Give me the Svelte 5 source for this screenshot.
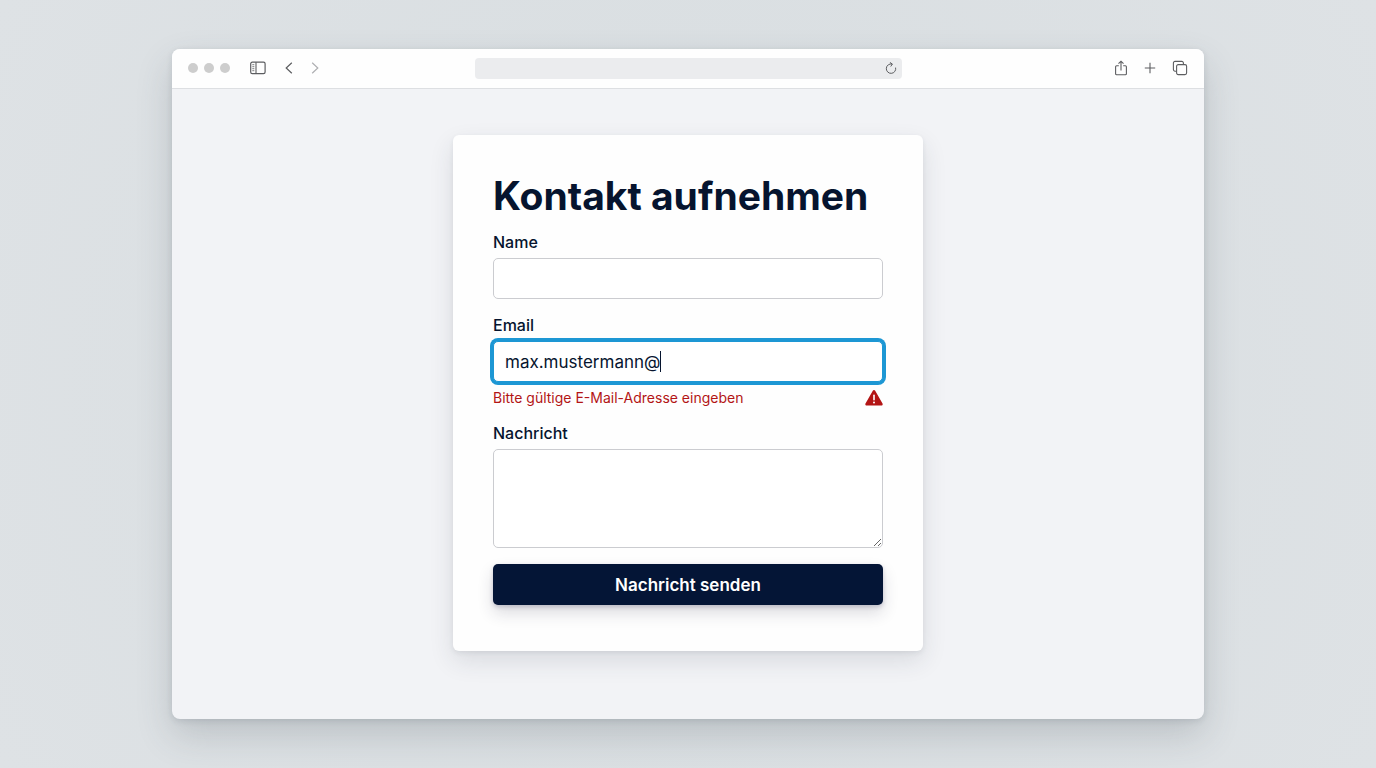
<script lang="ts">
  import { onMount } from 'svelte';

  let name = $state('');
  let email = $state('max.mustermann@');
  let message = $state('');
  let emailActive = $state(true);
  let emailInput: HTMLInputElement;
  let caretLeft = $state(0);

  const emailValid = $derived(/^[^\s@]+@[^\s@]+\.[^\s@]+$/.test(email));

  // Places the custom caret behind the typed address
  function placeCaret() {
    const ctx = document.createElement('canvas').getContext('2d');
    if (!ctx) return;
    const style = getComputedStyle(emailInput);
    ctx.font = `${style.fontWeight} ${style.fontSize} ${style.fontFamily}`;
    caretLeft = Math.round(parseInt(style.paddingLeft) + 1 + ctx.measureText(email).width);
  }

  onMount(() => {
    emailInput.focus();
    placeCaret();
  });

  function submit(event: SubmitEvent) {
    event.preventDefault();
    if (!emailValid) emailInput.focus();
  }
</script>

<div class="desktop">
  <div class="window">
    <header class="toolbar">
      <div class="group left">
        <div class="lights">
          <span></span>
          <span></span>
          <span></span>
        </div>
        <button class="tool sidebar" aria-label="Seitenleiste">
          <svg width="16" height="14" viewBox="0 0 16 14" fill="none" stroke="currentColor">
            <rect x="0.7" y="1.2" width="14.4" height="11.4" rx="1.6" stroke-width="1.2" />
            <path d="M6 1.2v11.4" stroke-width="1.1" />
            <path d="M2.3 3.7h2M2.3 5.7h2M2.3 7.7h2M2.3 9.7h2" stroke-width="0.8" />
          </svg>
        </button>
        <button class="tool back" aria-label="Zurück">
          <svg width="10" height="12" viewBox="0 0 10 12" fill="none" stroke="currentColor" stroke-width="1.2">
            <path d="M7.8 0.8 2.2 6l5.6 5.2" />
          </svg>
        </button>
        <button class="tool forward" aria-label="Vorwärts" disabled>
          <svg width="10" height="12" viewBox="0 0 10 12" fill="none" stroke="currentColor" stroke-width="1.2">
            <path d="M2.2 0.8 7.8 6l-5.6 5.2" />
          </svg>
        </button>
      </div>

      <div class="address">
        <input type="text" aria-label="Adresse" />
        <button class="tool reload" aria-label="Neu laden">
          <svg width="12" height="12" viewBox="0 0 12 12" fill="none" stroke="currentColor" stroke-width="1">
            <path d="M10.6 5.6A4.7 4.7 0 1 1 7.2 2.1" />
            <path d="M4.9 0.4 7.4 2.1 5.7 4.5" />
          </svg>
        </button>
      </div>

      <div class="group right">
        <button class="tool" aria-label="Teilen">
          <svg width="14" height="16" viewBox="0 0 14 16" fill="none" stroke="currentColor" stroke-width="1.1">
            <path d="M4.8 5.8H2.6a1 1 0 0 0-1 1v6.9a1 1 0 0 0 1 1h8.8a1 1 0 0 0 1-1V6.8a1 1 0 0 0-1-1H9.2" />
            <path d="M7 10.4V1.5M4.5 3.7 7 1.2l2.5 2.5" />
          </svg>
        </button>
        <button class="tool" aria-label="Neuer Tab">
          <svg width="12" height="12" viewBox="0 0 12 12" fill="none" stroke="currentColor" stroke-width="1.1">
            <path d="M6 0.8v10.4M0.8 6h10.4" />
          </svg>
        </button>
        <button class="tool" aria-label="Tabübersicht">
          <svg width="16" height="16" viewBox="0 0 16 16" fill="none" stroke="currentColor" stroke-width="1.1">
            <rect x="4.6" y="4.6" width="10" height="10" rx="1.6" />
            <path d="M4.6 11.2H3a1.6 1.6 0 0 1-1.6-1.6V3A1.6 1.6 0 0 1 3 1.4h6.8A1.6 1.6 0 0 1 11.4 3v1.6" />
          </svg>
        </button>
      </div>
    </header>

    <main>
      <form class="card" novalidate onsubmit={submit}>
        <h1>Kontakt aufnehmen</h1>

        <div class="field">
          <label for="name">Name</label>
          <input id="name" type="text" bind:value={name} />
        </div>

        <div class="field">
          <label for="email">Email</label>
          <div class="email-box">
            <input
              id="email"
              type="text"
              inputmode="email"
              class:active={emailActive}
              aria-invalid={!emailValid}
              aria-describedby="email-error"
              bind:value={email}
              bind:this={emailInput}
              oninput={placeCaret}
              onfocus={() => (emailActive = true)}
              onblur={() => (emailActive = false)}
            />
            {#if emailActive}
              <span class="caret" style:left="{caretLeft}px"></span>
            {/if}
          </div>
          {#if !emailValid}
            <div class="error" id="email-error">
              <span>Bitte gültige E-Mail-Adresse eingeben</span>
              <svg width="18" height="16" viewBox="0 0 18 16" aria-hidden="true">
                <path d="M7.8 0.8a1.4 1.4 0 0 1 2.4 0l7.3 12.7a1.4 1.4 0 0 1-1.2 2.1H1.7a1.4 1.4 0 0 1-1.2-2.1Z" fill="#b31515" />
                <path d="M9 5.4v4.4" stroke="#fff" stroke-width="1.6" stroke-linecap="round" />
                <circle cx="9" cy="12.6" r="1" fill="#fff" />
              </svg>
            </div>
          {/if}
        </div>

        <div class="field">
          <label for="message">Nachricht</label>
          <textarea id="message" bind:value={message}></textarea>
        </div>

        <button class="submit" type="submit">Nachricht senden</button>
      </form>
    </main>
  </div>
</div>

<style>
  :global(body) {
    margin: 0;
    font-family: Inter, 'Liberation Sans', sans-serif;
    color: #06142e;
  }

  .desktop {
    box-sizing: border-box;
    min-height: 100vh;
    padding: 49px 12.5%;
    display: flex;
    background: radial-gradient(circle at 50% 50%, #dadfe2 40%, #dee2e5 100%);
  }

  .window {
    flex: 1;
    display: flex;
    flex-direction: column;
    border-radius: 8px;
    overflow: hidden;
    background: #f2f3f6;
    box-shadow:
      0 16px 36px rgba(60, 70, 82, 0.2),
      0 2px 6px rgba(60, 70, 82, 0.14);
  }

  .toolbar {
    display: grid;
    grid-template-columns: 1fr 427px 1fr;
    align-items: center;
    height: 38px;
    padding: 0 16px 1px;
    background: #fefefe;
    border-bottom: 1px solid #dddfe2;
  }

  .group {
    display: flex;
    align-items: center;
  }

  .right {
    justify-content: flex-end;
    gap: 16px;
  }

  .lights {
    display: flex;
    gap: 6px;
    margin-right: 20px;
  }

  .lights span {
    width: 10px;
    height: 10px;
    border-radius: 50%;
    background: #cdcdcd;
  }

  .tool {
    display: flex;
    padding: 0;
    border: none;
    background: none;
    color: #5c5d60;
  }

  .back {
    margin: 0 16px 0 18px;
  }

  .forward {
    color: #aeafb2;
  }

  .address {
    display: flex;
    align-items: center;
    height: 21px;
    padding-right: 5px;
    border-radius: 4px;
    background: #ebecee;
  }

  .address input {
    flex: 1;
    min-width: 0;
    border: none;
    outline: none;
    background: none;
    font: inherit;
    font-size: 12px;
  }

  main {
    flex: 1;
    padding: 46px 24px;
  }

  .card {
    box-sizing: border-box;
    display: flex;
    flex-direction: column;
    gap: 16px;
    max-width: 470px;
    margin: 0 auto;
    padding: 40px 40px 46px;
    border-radius: 6px;
    background: #fefefe;
    box-shadow:
      0 10px 24px rgba(40, 48, 64, 0.12),
      0 2px 5px rgba(40, 48, 64, 0.08);
  }

  h1 {
    margin: 0;
    font-size: 39px;
    font-weight: 700;
    line-height: 41px;
  }

  .field {
    display: flex;
    flex-direction: column;
    gap: 6px;
  }

  label {
    font-size: 16px;
    font-weight: 500;
    line-height: 20px;
  }

  .field input,
  textarea {
    display: block;
    box-sizing: border-box;
    width: 100%;
    padding: 0 11px;
    border: 1px solid #cbccd0;
    border-radius: 5px;
    outline: none;
    background: #fff;
    color: inherit;
    font: inherit;
    font-size: 17px;
  }

  .field input {
    height: 41px;
  }

  textarea {
    height: 99px;
    padding: 10px 11px;
    resize: vertical;
  }

  .email-box {
    position: relative;
  }

  .field input.active {
    border-color: #1d97d4;
    box-shadow: 0 0 0 3px #1d97d4;
    caret-color: transparent;
  }

  .caret {
    position: absolute;
    top: 10px;
    width: 1px;
    height: 21px;
    background: #06142e;
  }

  .error {
    display: flex;
    align-items: center;
    justify-content: space-between;
    color: #b31515;
    font-size: 14px;
    line-height: 19px;
  }

  .submit {
    height: 41px;
    border: none;
    border-radius: 5px;
    background: #041536;
    color: #fff;
    font: inherit;
    font-size: 17px;
    font-weight: 600;
    box-shadow:
      0 8px 16px rgba(40, 36, 60, 0.16),
      0 2px 4px rgba(40, 36, 80, 0.2);
  }
</style>
